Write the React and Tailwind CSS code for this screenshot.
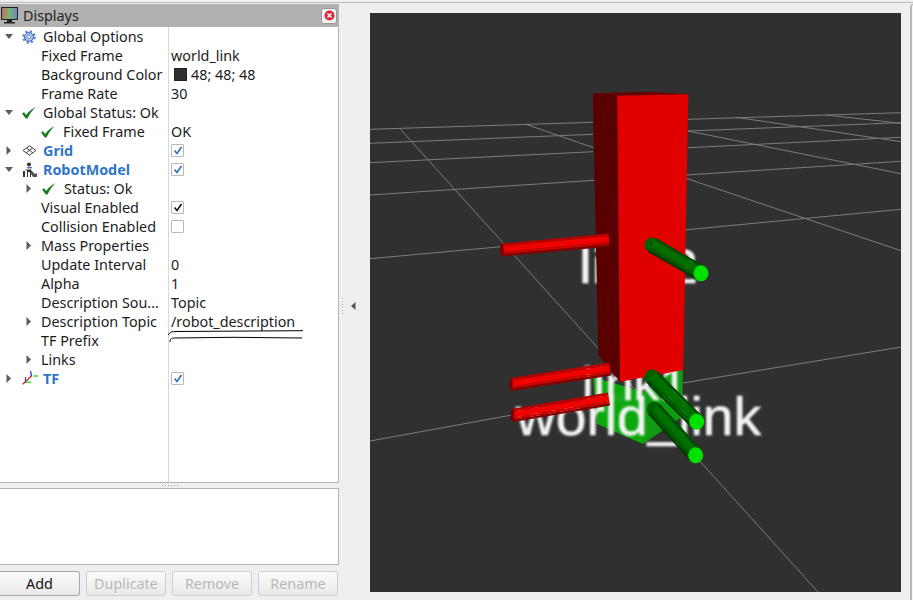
const Arrow = ({ open }) =>
  open ? (
    <svg width="9" height="6" viewBox="0 0 9 6"><path d="M0 0H8L4 5Z" fill="#5c5c5c" /></svg>
  ) : (
    <svg width="6" height="9" viewBox="0 0 6 9"><path d="M0.5 0V9L5 4.5Z" fill="#5c5c5c" /></svg>
  );

const Check = () => (
  <svg width="14" height="12" viewBox="0 0 14 12" className="shrink-0">
    <path d="M0 6.5L2 5.2L4.2 8C6 5 9.500 2 13.500 0C10.500 3 7.500 7 5.500 11.500H3.800Z" fill="#1c7a1c" />
  </svg>
);

const GearIcon = () => (
  <svg width="14" height="14" viewBox="0 0 14 14">
    <circle cx="7" cy="7" r="5.600" fill="none" stroke="#5b86d6" strokeWidth="2.400" strokeDasharray="2.200 2.200" />
    <circle cx="7" cy="7" r="4.400" fill="#a9c3ef" stroke="#3f68bd" strokeWidth="1" />
    <circle cx="7" cy="7" r="1.800" fill="#fff" stroke="#5b86d6" strokeWidth="0.800" />
  </svg>
);

const GridIcon = () => (
  <svg width="15" height="11" viewBox="0 0 15 11" fill="none" stroke="#444" strokeWidth="1">
    <path d="M7.500 0.800L14 5.500L7.500 10.200L1 5.500Z" />
    <path d="M4.500 3L10.800 7.800M10.500 3L4.200 7.800" />
  </svg>
);

const RobotIcon = () => (
  <svg width="16" height="16" viewBox="0 0 16 16">
    <circle cx="7" cy="2.500" r="2" fill="#333" />
    <rect x="5" y="5" width="5" height="1.400" fill="#4a76c4" />
    <path d="M1 15V9H3V15ZM5 15V7.500H9V15H8V10H6V15Z" fill="#333" />
    <path d="M9 8L13 12L15 11V15H11L9 12Z" fill="#555" />
    <path d="M3 8H5" stroke="#888" />
  </svg>
);

const TfIcon = () => (
  <svg width="17" height="15" viewBox="0 0 17 15" fill="none" strokeWidth="1.200">
    <path d="M0.700 13.300L9.700 4.700" stroke="#e01818" />
    <path d="M8.500 0L9.500 5" stroke="#2222dd" />
    <path d="M3.500 6V11.500" stroke="#3a3ae0" />
    <path d="M4 11.300H9" stroke="#22cc22" />
    <path d="M11 5H16" stroke="#22cc22" />
  </svg>
);

const Box = ({ tone }) => (
  <span className="w-[13px] h-[13px] border border-[#b8b8b8] rounded-[1px] bg-white flex items-center justify-center">
    {tone && (
      <svg width="10" height="9" viewBox="0 0 10 9" fill="none">
        <path d="M1.500 4.500L4 7.500L8.500 1" stroke={tone} strokeWidth="1.600" />
      </svg>
    )}
  </span>
);

const BLUE = "#2f6fb5";
const rows = [
  { pad: 5, arrow: "open", icon: <GearIcon />, label: "Global Options" },
  { pad: 41, label: "Fixed Frame", value: "world_link" },
  { pad: 41, label: "Background Color", swatch: true, value: "48; 48; 48" },
  { pad: 41, label: "Frame Rate", value: "30" },
  { pad: 5, arrow: "open", icon: <Check />, label: "Global Status: Ok" },
  { pad: 41, check: true, label: "Fixed Frame", value: "OK" },
  { pad: 6, arrow: "closed", icon: <GridIcon />, label: "Grid", bold: true, box: BLUE },
  { pad: 5, arrow: "open", icon: <RobotIcon />, label: "RobotModel", bold: true, box: BLUE },
  { pad: 26, arrow: "closed", check: true, label: "Status: Ok" },
  { pad: 41, label: "Visual Enabled", box: "#111" },
  { pad: 41, label: "Collision Enabled", box: "none" },
  { pad: 26, arrow: "closed", child: true, label: "Mass Properties" },
  { pad: 41, label: "Update Interval", value: "0" },
  { pad: 41, label: "Alpha", value: "1" },
  { pad: 41, label: "Description Sou...", value: "Topic" },
  { pad: 26, arrow: "closed", child: true, label: "Description Topic", value: "/robot_description" },
  { pad: 41, label: "TF Prefix" },
  { pad: 26, arrow: "closed", child: true, label: "Links" },
  { pad: 6, arrow: "closed", icon: <TfIcon />, label: "TF", bold: true, box: BLUE },
];

const Row = ({ row }) => {
  const hasIcon = !!row.icon;
  return (
    <div className="flex h-[19px] items-center">
      <div className="w-[169px] h-full shrink-0 border-r border-[#d9d9d9] flex items-center relative" style={{ paddingLeft: row.pad }}>
        {row.arrow && (
          <span className={row.child ? "w-[15px] flex items-center" : row.arrow === "open" ? "w-[17px] flex items-center" : "w-[16px] flex items-center"}>
            <Arrow open={row.arrow === "open"} />
          </span>
        )}
        {hasIcon && <span className="w-[21px] flex items-center">{row.icon}</span>}
        {row.check && <span className="w-[22px] flex items-center"><Check /></span>}
        <span className={row.bold ? "pt-[2px] font-bold text-[#2f75c9] whitespace-nowrap" : "pt-[2px] whitespace-nowrap"}>{row.label}</span>
      </div>
      <div className="pl-[2px] flex items-center gap-[4px] whitespace-nowrap">
        {row.swatch && <span className="ml-[3px] w-[13px] h-[13px] bg-[#303030] border border-[#222]" />}
        {row.value && <span className="pt-[2px]">{row.value}</span>}
        {row.box && <Box tone={row.box === "none" ? null : row.box} />}
      </div>
    </div>
  );
};

const Button = ({ children, disabled, className }) => (
  <button
    className={
      "h-[25px] w-[80px] pt-[2px] border rounded-[3px] bg-gradient-to-b from-[#fbfbfb] to-[#e9e9e9] " +
      (disabled ? "text-[#b8b8b8] border-[#cfcfcf] " : "text-[#111] border-[#a9a9a9] ") +
      (className || "")
    }
  >
    {children}
  </button>
);

// flat-ended tube: bands offset across its thickness
const Tube = ({ a, b, w, bands }) => {
  const dx = b[0] - a[0];
  const dy = b[1] - a[1];
  const len = Math.hypot(dx, dy);
  const nx = -dy / len;
  const ny = dx / len;
  return (
    <g>
      {bands.map(([from, to, color], i) => {
        const p = (q, t) => `${q[0] + nx * w * t},${q[1] + ny * w * t}`;
        return <polygon key={i} points={`${p(a, from)} ${p(b, from)} ${p(b, to)} ${p(a, to)}`} fill={color} />;
      })}
    </g>
  );
};

const Red = ({ a, b }) => (
  <g>
    <Tube
      a={a}
      b={b}
      w={13}
      bands={[
        [-0.5, -0.3, "#b80000"],
        [-0.3, 0.15, "#f00000"],
        [0.15, 0.33, "#d00000"],
        [0.33, 0.5, "#860000"],
      ]}
    />
    <ellipse cx={a[0]} cy={a[1]} rx="1.800" ry="6.500" fill="#7a0000" />
  </g>
);

const Green = ({ a, b }) => (
  <g>
    <circle cx={a[0]} cy={a[1]} r="7.500" fill="#006000" />
    <Tube
      a={a}
      b={b}
      w={16}
      bands={[
        [-0.5, -0.32, "#004c00"],
        [-0.32, 0.15, "#007000"],
        [0.15, 0.36, "#005a00"],
        [0.36, 0.5, "#003a00"],
      ]}
    />
    <ellipse cx={b[0]} cy={b[1]} rx="7.500" ry="8" fill="#00e000" />
  </g>
);

const gridLines = [
  [370, 129.3, 593, 122.3], [688, 119.3, 901, 112.7],
  [370, 143.3, 593, 134.3], [688, 131, 901, 122.7],
  [370, 162.7, 593, 151.7], [688, 147.7, 901, 137.3],
  [370, 195, 594.500, 180.3], [686, 175, 901, 161.3],
  [370, 258.7, 501, 246.7], [684, 230, 901, 209.3],
  [370, 441, 512, 415], [683, 383, 901, 347],
  [400, 128.7, 818, 592],
  [526, 124.3, 593.500, 147.7], [686, 178.3, 901, 250.7],
  [688, 131, 901, 173.7],
  [736, 117.3, 901, 141.7],
  [825.6, 115, 901, 123.3],
];

const Scene = () => (
  <svg viewBox="370 13 531 579" className="block w-[531px] h-[579px]">
    <defs>
      <filter id="soft"><feGaussianBlur stdDeviation="0.900" /></filter>
    </defs>
    <rect x="370" y="13" width="531" height="579" fill="#303030" />
    {gridLines.map((l, i) => (
      <line key={i} x1={l[0]} y1={l[1]} x2={l[2]} y2={l[3]} stroke="#7c7c7c" strokeWidth="1" />
    ))}
    {/* link1 base */}
    <polygon points="593,377 643,392 643,444 597,424" fill="#0ca70c" />
    <polygon points="643,392 683,362 682,417 643,444" fill="#109c10" />
    <polygon points="610,392 628,395 628,403 610,402" fill="#18a818" />
    <g fontFamily="'Liberation Sans', sans-serif" fill="#f4f4f4" stroke="#f4f4f4" strokeWidth="0.600" filter="url(#soft)">
      <text x="579" y="283" fontSize="48" textLength="119" lengthAdjust="spacingAndGlyphs">link2</text>
      <text x="582" y="400" fontSize="46" textLength="106" lengthAdjust="spacingAndGlyphs">link1</text>
      <text x="516" y="435" fontSize="54" textLength="245" lengthAdjust="spacingAndGlyphs">world_link</text>
    </g>
    {/* link2 body */}
    <polygon points="592.700,93.300 653,91.700 688.300,94.300 617.300,95.700" fill="#6a0000" />
    <polygon points="592.700,93.300 617.300,95.700 620,381.700 598.300,355" fill="#590000" />
    <polygon points="617.300,95.700 688.300,94.300 683.300,370 620,381.700" fill="#e00000" />
    <Red a={[502, 250]} b={[609, 240]} />
    <Red a={[511, 384.500]} b={[610, 369]} />
    <Red a={[512.500, 415.500]} b={[609, 399]} />
    <Green a={[652, 245]} b={[701, 273.300]} />
    <Green a={[652, 377]} b={[696.700, 421.700]} />
    <Green a={[654, 409]} b={[695.700, 455.300]} />
  </svg>
);

export default function App() {
  return (
    <div className="w-[913px] h-[600px] overflow-hidden bg-[#efefef] text-[14.35px] leading-none text-[#1c1c1c] font-['Noto_Sans','Open_Sans',sans-serif] flex flex-col">
      <div className="h-[2px] shrink-0" />
      <div className="h-[1px] shrink-0 bg-[#bcbcbc]" />
      <div className="flex flex-1 min-h-0">
        {/* Displays panel */}
        <div className="w-[339px] shrink-0 flex flex-col pt-[1px]">
          <div className="h-[23px] shrink-0 bg-[#b1b1b1] flex items-center justify-between pl-[1px] pr-[2px]">
            <div className="flex items-center gap-[5px]">
              <svg width="17" height="17" viewBox="0 0 17 17">
                <defs>
                  <linearGradient id="screen">
                    <stop offset="0" stopColor="#c46a6a" />
                    <stop offset="0.5" stopColor="#74b874" />
                    <stop offset="1" stopColor="#7a7ac8" />
                  </linearGradient>
                </defs>
                <rect x="0.500" y="0.500" width="16" height="12" fill="url(#screen)" stroke="#222" />
                <path d="M6 13H11V15H14V16.500H3V15H6Z" fill="#222" />
              </svg>
              <span className="pt-[2px] text-[#222]">Displays</span>
            </div>
            <div className="w-[16px] h-[16px] rounded-[3px] bg-[#f4f4f4] border border-[#999] flex items-center justify-center">
              <svg width="11" height="11" viewBox="0 0 11 11">
                <circle cx="5.500" cy="5.500" r="5" fill="#d8263a" />
                <path d="M3.500 3.500L7.500 7.500M7.500 3.500L3.500 7.500" stroke="#fff" strokeWidth="1.400" />
              </svg>
            </div>
          </div>
          <div className="h-[456px] shrink-0 bg-white border-r border-b border-[#b4b4b4] flex flex-col relative">
            {rows.map((r, i) => (
              <Row key={i} row={r} />
            ))}
            <div className="flex-1 w-[169px] border-r border-[#d9d9d9]" />
            <svg viewBox="168 329 140 16" className="absolute left-[168px] top-[302px] w-[140px] h-[16px]" fill="none" stroke="#000" strokeWidth="1">
              <path d="M168 335C170 332 172 331.500 176 331.500L303 330.700" />
              <path d="M170 342C170 339 171 338 175 338L233 337.300L302 338" />
            </svg>
          </div>
          <div className="h-[5px] shrink-0 flex items-center justify-center gap-[2px] pl-[1px]">
            {[0, 1, 2, 3, 4, 5].map((i) => (
              <span key={i} className="w-px h-px bg-[#a8a8a8]" />
            ))}
          </div>
          <div className="h-[77px] shrink-0 bg-white border-t border-r border-b border-[#b4b4b4]" />
          <div className="flex gap-[6px] mt-[6px]">
            <Button className="border-l-0 rounded-l-none w-[79px]">Add</Button>
            <Button disabled>Duplicate</Button>
            <Button disabled>Remove</Button>
            <Button disabled>Rename</Button>
          </div>
        </div>
        {/* splitter */}
        <div className="w-[31px] shrink-0 flex items-center pl-[3px] pt-[9px] gap-[8px]">
          <div className="flex flex-col gap-[2px]">
            {[0, 1, 2, 3, 4, 5].map((i) => (
              <span key={i} className="w-px h-px bg-[#b0b0b0]" />
            ))}
          </div>
          <svg width="5" height="8" viewBox="0 0 5 8"><path d="M4.500 0V8L0 4Z" fill="#555" /></svg>
        </div>
        {/* 3D view */}
        <div className="w-[531px] shrink-0 pt-[10px]">
          <Scene />
        </div>
        <div className="w-[9px] shrink-0" />
        <div className="flex-1 mt-[1px] border-l-2 border-t border-[#b8b8b8] rounded-tl-[3px] bg-[#f6f6f6]" />
      </div>
    </div>
  );
}
